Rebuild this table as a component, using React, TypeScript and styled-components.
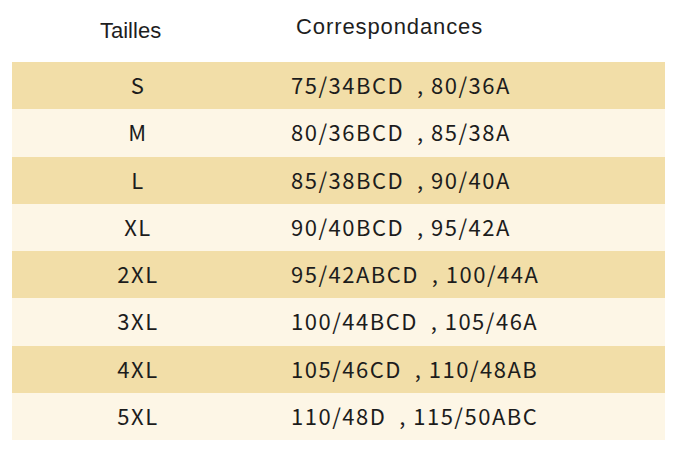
import React from "react";
import styled, { createGlobalStyle } from "styled-components";

const Global = createGlobalStyle`
  html, body { margin: 0; padding: 0; background: #ffffff; }
  body { width: 679px; height: 458px; overflow: hidden; }
`;

const Page = styled.div`
  width: 679px;
  height: 458px;
  padding: 0 14px 0 12px;
  box-sizing: border-box;
  display: flex;
  flex-direction: column;
`;

const Header = styled.div`
  display: grid;
  grid-template-columns: 252px 1fr;
  height: 62px;
`;

const HeadCell = styled.div<{ $top: number; $left: number; $spacing: number }>`
  padding-top: ${(p) => p.$top}px;
  padding-left: ${(p) => p.$left}px;
  font-family: "Liberation Sans", Arial, sans-serif;
  font-size: 22px;
  letter-spacing: ${(p) => p.$spacing}px;
  color: #1e1e1e;
  line-height: 26px;
`;

const Row = styled.div<{ $dark: boolean }>`
  display: grid;
  grid-template-columns: 252px 1fr;
  align-items: center;
  height: 47.25px;
  background: ${(p) => (p.$dark ? "#f2dea8" : "#fdf6e6")};
`;

const Cell = styled.div<{ $center?: boolean }>`
  font-family: "Noto Sans CJK SC", "Noto Sans", sans-serif;
  font-size: 22px;
  line-height: 28px;
  padding-bottom: 3px;
  letter-spacing: 1.5px;
  color: #1c1c1c;
  text-align: ${(p) => (p.$center ? "center" : "left")};
  padding-left: ${(p) => (p.$center ? 0 : 27)}px;
  white-space: pre;
`;

const rows: [string, string, string][] = [
  ["S", "75/34BCD", "80/36A"],
  ["M", "80/36BCD", "85/38A"],
  ["L", "85/38BCD", "90/40A"],
  ["XL", "90/40BCD", "95/42A"],
  ["2XL", "95/42ABCD", "100/44A"],
  ["3XL", "100/44BCD", "105/46A"],
  ["4XL", "105/46CD", "110/48AB"],
  ["5XL", "110/48D", "115/50ABC"],
];

export default function App() {
  return (
    <>
      <Global />
      <Page>
        <Header>
          <HeadCell $top={18} $left={88} $spacing={0}>Tailles</HeadCell>
          <HeadCell $top={14} $left={32} $spacing={0.9}>Correspondances</HeadCell>
        </Header>
        {rows.map(([size, a, b], i) => (
          <Row key={size} $dark={i % 2 === 0}>
            <Cell $center>{size}</Cell>
            <Cell>{`${a}  , ${b}`}</Cell>
          </Row>
        ))}
      </Page>
    </>
  );
}
